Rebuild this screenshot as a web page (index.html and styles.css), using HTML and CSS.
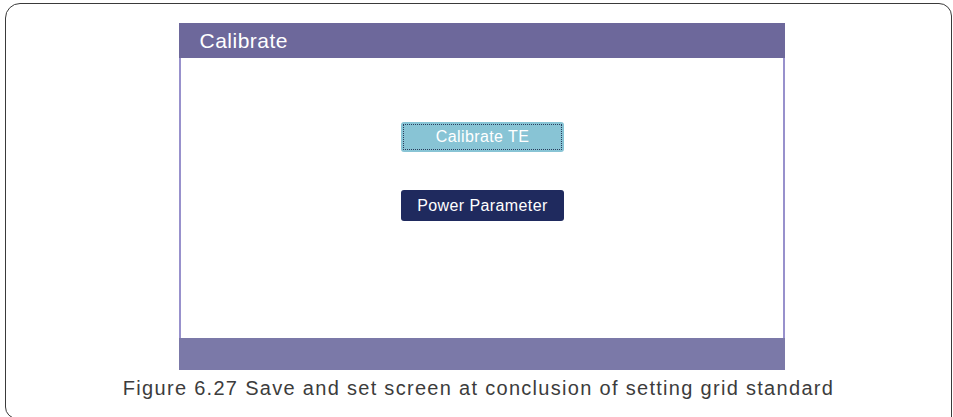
FILE: index.html
```html
<!DOCTYPE html>
<html lang="en">
<head>
<meta charset="UTF-8">
<meta name="viewport" content="width=device-width, initial-scale=1.0">
<title>Calibrate</title>
<link rel="stylesheet" href="styles.css">
</head>
<body>
<div class="frame">
    <div class="screen">
        <div class="screen-header">Calibrate</div>
        <!-- Menu items -->
        <div class="screen-body">
            <div class="menu-item selected">Calibrate TE</div>
            <div class="menu-item">Power Parameter</div>
        </div>
        <div class="screen-footer"></div>
    </div>
    <p class="caption">Figure 6.27 Save and set screen at conclusion of setting grid standard</p>
</div>
</body>
</html>
```

FILE: styles.css
```css
body {
    margin: 3px 0 0 5px;
    font-family: "Liberation Sans", Arial, sans-serif;
    background: white;
    overflow: hidden;
}
.frame {
    box-sizing: border-box;
    width: 947px;
    height: 416px;
    border: 1.5px solid #3a3a3a;
    border-radius: 15px 13px 0 12px;
    padding-top: 18.5px;
}
.screen {
    width: 606px;
    margin-left: 172.5px;
}
.screen-header {
    height: 35px;
    background-color: #6d689b;
    color: white;
    font-size: 21px;
    letter-spacing: 0.5px;
    line-height: 36px;
    padding-left: 21px;
}
.screen-body {
    box-sizing: border-box;
    height: 280px;
    border-left: 2px solid #9891cc;
    border-right: 2px solid #9891cc;
    display: flex;
    flex-direction: column;
    align-items: center;
    padding-top: 64px;
    gap: 38px;
}
.menu-item {
    width: 163px;
    height: 31px;
    line-height: 31px;
    margin-left: 2px;
    border-radius: 3px;
    background-color: #1f2a5e;
    color: white;
    font-size: 16px;
    letter-spacing: 0.4px;
    text-align: center;
}
.menu-item.selected {
    height: 30px;
    line-height: 30px;
    background-color: #88c4d5;
    outline: 1.5px dotted #2a3d5c;
    outline-offset: -3px;
}
.screen-footer {
    height: 32px;
    background-color: #7b79a8;
}
.caption {
    margin: 7px 0 0;
    text-align: center;
    font-size: 20px;
    letter-spacing: 1.3px;
    color: #3c3c3c;
}
```
